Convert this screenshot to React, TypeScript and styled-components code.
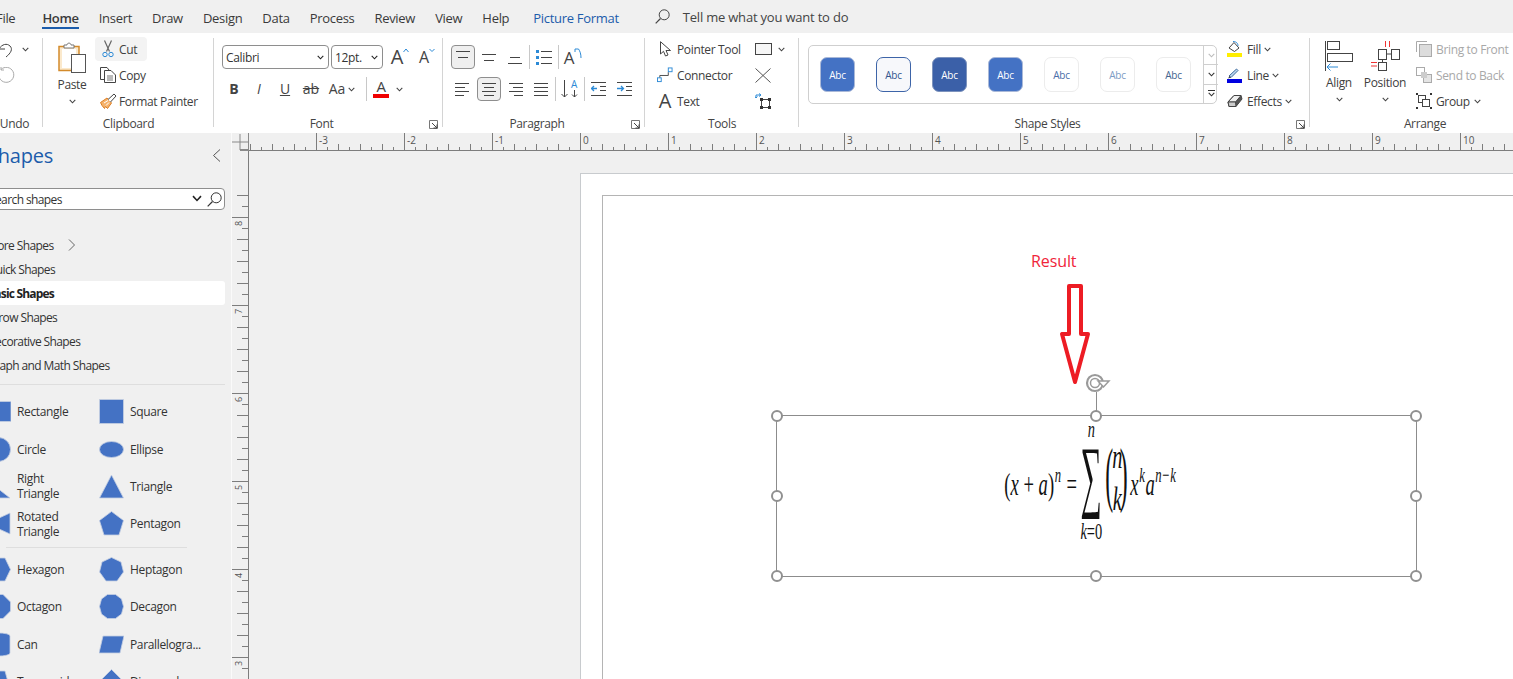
import React from "react";
import styled, { createGlobalStyle } from "styled-components";

const UI = `"Open Sans", "Noto Sans", sans-serif`;

const Global = createGlobalStyle`
  html, body { margin: 0; padding: 0; background: #f0f0f0; overflow: hidden; }
  body { font-family: ${UI}; color: #333; }
`;

const Screen = styled.div`
  width: 1513px;
  height: 679px;
  overflow: hidden;
  background: #f0f0f0;
  display: flex;
  flex-direction: column;
`;

/* tabs */
const TabBar = styled.div`
  height: 33px;
  flex: none;
  display: flex;
  align-items: center;
  gap: 20px;
  margin-left: -4px;
  font-size: 13px;
  letter-spacing: -0.3px;
  white-space: nowrap;
  color: #3a3a3a;
`;
const Tab = styled.div<{ $on?: boolean; $blue?: boolean }>`
  position: relative;
  height: 33px;
  line-height: 36px;
  font-weight: ${(p) => (p.$on ? 600 : 400)};
  color: ${(p) => (p.$blue ? "#1c5cab" : "#3a3a3a")};
  ${(p) => p.$blue && "margin-left: 4px;"}
  ${(p) =>
    p.$on &&
    `margin-left: 7px; &::after { content: ""; position: absolute; left: 0; right: 0; top: 27px; height: 2px; background: #1c5cab; }`}
`;
const TellMe = styled.div`
  display: flex;
  align-items: center;
  gap: 13px;
  margin-left: 16px;
  color: #444;
  letter-spacing: -0.2px;
`;

/* ribbon */
const Ribbon = styled.div`
  height: 100px;
  flex: none;
  background: #fff;
  display: flex;
  padding-top: 3px;
  box-sizing: border-box;
  font-size: 12px;
  letter-spacing: -0.35px;
  white-space: nowrap;
`;
const Group = styled.section<{ $w: number; $ml?: number }>`
  width: ${(p) => p.$w}px;
  margin-left: ${(p) => p.$ml ?? 0}px;
  height: 91px;
  flex: none;
  box-sizing: border-box;
  display: flex;
  flex-direction: column;
  position: relative;
  &::after {
    content: "";
    position: absolute;
    right: 0;
    top: 2px;
    bottom: 0;
    width: 1px;
    background: #d4d4d4;
  }
`;
const GroupBody = styled.div<{ $pad?: number }>`
  height: 78px;
  display: flex;
  padding-left: ${(p) => p.$pad ?? 0}px;
`;
const GroupFoot = styled.div`
  height: 13px;
  line-height: 20px;
  display: flex;
  color: #444;
`;
const GroupName = styled.div`
  flex: 1;
  text-align: center;
`;
const Launcher = styled.div`
  width: 14px;
  padding-top: 6px;
  flex: none;
  line-height: 0;
`;
const Col = styled.div<{ $w?: number; $ml?: number }>`
  display: flex;
  flex-direction: column;
  ${(p) => p.$w && `width: ${p.$w}px; flex: none;`}
  ${(p) => p.$ml && `margin-left: ${p.$ml}px;`}
`;
const ToolRow = styled.div<{ $dim?: boolean; $hover?: boolean; $gap?: number }>`
  height: 26px;
  display: flex;
  align-items: center;
  gap: ${(p) => p.$gap ?? 5}px;
  color: ${(p) => (p.$dim ? "#a8a8a8" : "#404040")};
  ${(p) =>
    p.$hover &&
    `height: 24px; margin: 1px 0 1px -5px; width: 52px; box-sizing: border-box; background: #f3f3f3; border-radius: 4px; padding-left: 7px;`}
`;
const IconSlot = styled.span<{ $w: number }>`
  width: ${(p) => p.$w}px;
  flex: none;
  display: flex;
  justify-content: center;
  align-items: center;
`;
const BigButton = styled.div<{ $w: number; $top: number }>`
  width: ${(p) => p.$w}px;
  flex: none;
  display: flex;
  flex-direction: column;
  align-items: center;
  padding-top: ${(p) => p.$top}px;
  color: #404040;
`;
const BigLabel = styled.div`
  line-height: 16px;
  margin: 4px 0 6px;
`;
const Chev = styled.svg<{ $ml?: number }>`
  flex: none;
  display: block;
  margin-left: ${(p) => p.$ml ?? 0}px;
`;
const Chevron = ({ c = "#444", ml = 0, w = 7 }: { c?: string; ml?: number; w?: number }) => (
  <Chev $ml={ml} width={w} height={(w * 5) / 7} viewBox="0 0 7 5">
    <path d="M.7 .8 3.5 3.8 6.3 .8" fill="none" stroke={c} strokeWidth="1.1" />
  </Chev>
);
const SelectBox = styled.div<{ $w: number }>`
  width: ${(p) => p.$w}px;
  height: 24px;
  flex: none;
  box-sizing: border-box;
  border: 1px solid #8e8e8e;
  border-radius: 4px;
  display: flex;
  align-items: center;
  justify-content: space-between;
  padding: 0 4px 0 3px;
  color: #333;
`;
const FlatRow = styled.div<{ $gap: number; $top: number }>`
  display: flex;
  align-items: center;
  height: 24px;
  gap: ${(p) => p.$gap}px;
  margin-top: ${(p) => p.$top}px;
`;
const Btn = styled.div<{ $w?: number; $on?: boolean; $ml?: number }>`
  width: ${(p) => p.$w ?? 24}px;
  height: 24px;
  flex: none;
  box-sizing: border-box;
  display: flex;
  align-items: center;
  justify-content: center;
  border-radius: 4px;
  color: #444;
  ${(p) => p.$ml && `margin-left: ${p.$ml}px;`}
  ${(p) => p.$on && "background: #efefef; border: 1px solid #8e8e8e;"}
`;
const VRule = styled.div<{ $mx?: number }>`
  width: 1px;
  height: 24px;
  flex: none;
  background: #c8c8c8;
  margin: 0 ${(p) => p.$mx ?? 0}px;
`;
const Glyph = styled.span<{ $size: number; $weight?: number; $italic?: boolean }>`
  font-size: ${(p) => p.$size}px;
  font-weight: ${(p) => p.$weight ?? 400};
  font-style: ${(p) => (p.$italic ? "italic" : "normal")};
  line-height: 1;
  letter-spacing: 0;
  color: #444;
`;
const Strike = styled(Glyph)`
  text-decoration: line-through;
`;
const Under = styled(Glyph)`
  text-decoration: underline;
`;
const FontColor = styled.div`
  width: 16px;
  flex: none;
  display: flex;
  flex-direction: column;
  align-items: center;
  font-size: 15px;
  line-height: 15px;
  margin-top: -1px;
  color: #444;
`;
const ColorBar = styled.div`
  width: 16px;
  height: 4px;
  background: #f00000;
`;

/* gallery */
const Gallery = styled.div`
  width: 409px;
  height: 59px;
  margin-top: 9px;
  flex: none;
  box-sizing: border-box;
  border: 1px solid #cfcfcf;
  border-radius: 5px;
  display: flex;
  align-items: center;
  padding-left: 11px;
  gap: 21px;
`;
const StyleChip = styled.div<{ $bg: string; $fg: string; $bd: string }>`
  width: 35px;
  height: 35px;
  flex: none;
  box-sizing: border-box;
  border-radius: 7px;
  background: ${(p) => p.$bg};
  color: ${(p) => p.$fg};
  border: 1px solid ${(p) => p.$bd};
  font-size: 10px;
  letter-spacing: -0.2px;
  display: flex;
  align-items: center;
  justify-content: center;
`;
const Scroller = styled.div`
  width: 14px;
  height: 57px;
  margin-left: -9px;
  flex: none;
  display: flex;
  flex-direction: column;
  border-left: 1px solid #cfcfcf;
`;
const ScrollCell = styled.div`
  flex: 1;
  display: flex;
  flex-direction: column;
  gap: 1px;
  align-items: center;
  justify-content: center;
  & + & { border-top: 1px solid #cfcfcf; }
`;
const ScrollBar = styled.div`
  width: 7px;
  height: 1px;
  background: #333;
`;

/* lower part */
const Main = styled.div`
  flex: 1;
  display: flex;
  min-height: 0;
`;
const Sidebar = styled.aside`
  width: 232px;
  flex: none;
  box-sizing: border-box;
  border-right: 1px solid #fafafa;
  overflow: hidden;
  font-size: 12px;
  letter-spacing: -0.35px;
`;
const SideInner = styled.div`
  width: 238px;
  margin-left: -13px;
`;
const SideHead = styled.div`
  margin-top: 8px;
  height: 28px;
  display: flex;
  align-items: center;
  justify-content: space-between;
  padding-right: 4px;
  font-size: 20px;
  letter-spacing: -0.2px;
  color: #1c5cab;
`;
const SearchBox = styled.div`
  margin-top: 19px;
  height: 22px;
  box-sizing: border-box;
  background: #fff;
  border: 1px solid #8e8e8e;
  border-radius: 4px;
  display: flex;
  align-items: center;
  gap: 5px;
  padding: 0 2px 0 1px;
  letter-spacing: -0.6px;
  color: #333;
`;
const SearchText = styled.div`
  flex: 1;
`;
const NavList = styled.div`
  margin-top: 23px;
  display: flex;
  flex-direction: column;
  letter-spacing: -0.6px;
`;
const NavItem = styled.div<{ $on?: boolean }>`
  height: 24px;
  display: flex;
  align-items: center;
  gap: 14px;
  color: #333;
  border-radius: 3px;
  ${(p) => p.$on && "background: #fff; font-weight: 700; color: #222; letter-spacing: -0.8px;"}
`;
const SideRule = styled.div<{ $l?: number; $w?: number; $t: number; $b: number }>`
  height: 1px;
  background: #dedede;
  margin: ${(p) => p.$t}px 0 ${(p) => p.$b}px ${(p) => p.$l ?? 0}px;
  ${(p) => p.$w && `width: ${p.$w}px;`}
`;
const ShapeGrid = styled.div`
  display: grid;
  grid-template-columns: 113px 113px;
  grid-auto-rows: 37.4px;
  margin-left: -1px;
`;
const ShapeItem = styled.div`
  display: flex;
  align-items: center;
  gap: 6px;
  line-height: 15px;
  color: #333;
`;
const ShapeName = styled.div`
  white-space: pre-line;
`;

const Workspace = styled.div`
  flex: 1;
  display: flex;
  flex-direction: column;
  min-width: 0;
`;
const RulerRow = styled.div`
  height: 18px;
  flex: none;
  display: flex;
`;
const RulerSvg = styled.svg`
  display: block;
  flex: none;
`;
const CanvasRow = styled.div`
  flex: 1;
  display: flex;
  min-height: 0;
`;
const Canvas = styled.div`
  flex: 1;
  padding: 22px 0 0 331px;
  overflow: hidden;
`;
const Page = styled.div`
  width: 1000px;
  height: 700px;
  box-sizing: border-box;
  background: #fff;
  border: 1px solid #c8cbce;
  padding: 21px;
`;
const Sheet = styled.div`
  height: 100%;
  box-sizing: border-box;
  border: 1px solid #b4b4b4;
  position: relative;
`;
const ResultLabel = styled.div`
  position: absolute;
  left: 428px;
  top: 53px;
  font-size: 16px;
  line-height: 24px;
  letter-spacing: -0.1px;
  color: #f0243a;
`;
const FreeSvg = styled.svg<{ $x: number; $y: number }>`
  position: absolute;
  left: ${(p) => p.$x}px;
  top: ${(p) => p.$y}px;
`;
const Selection = styled.div`
  position: absolute;
  left: 173px;
  top: 219px;
  width: 641px;
  height: 162px;
  box-sizing: border-box;
  border: 1px solid #8c8c8c;
  display: flex;
  justify-content: center;
  align-items: flex-start;
  padding: 9px 12px 0 0;
`;
const Handle = styled.div<{ $x: string; $y: string }>`
  position: absolute;
  left: ${(p) => p.$x};
  top: ${(p) => p.$y};
  width: 12px;
  height: 12px;
  box-sizing: border-box;
  margin: -6.5px 0 0 -6.5px;
  border: 2px solid #909090;
  border-radius: 50%;
  background: #fff;
`;
const Formula = styled.div`
  height: 116px;
  display: flex;
  align-items: center;
  flex: none;
  font-family: "Liberation Serif", serif;
  font-style: italic;
  font-size: 31px;
  color: #111;
  white-space: nowrap;
  transform: scaleX(0.6);
`;
const MathRun = styled.div<{ $ml?: number }>`
  margin-left: ${(p) => p.$ml ?? 0}px;
  padding-top: 4px;
`;
const Upright = styled.span`
  font-style: normal;
`;
const Sup = styled.span`
  font-size: 0.68em;
  vertical-align: 0.6em;
  line-height: 0;
  padding: 0 1px;
`;
const SumCol = styled.div`
  width: 36px;
  display: flex;
  flex-direction: column;
  align-items: center;
  margin-left: 6px;
`;
const Limit = styled.div<{ $h: number; $top?: number }>`
  font-size: 24px;
  line-height: ${(p) => p.$h}px;
  height: ${(p) => p.$h}px;
  margin-top: ${(p) => p.$top ?? 0}px;
`;
const Sigma = styled.div`
  font-style: normal;
  font-size: 80px;
  line-height: 76px;
  height: 76px;
  margin-top: 4px;
  transform: scaleX(0.62);
`;
const Binom = styled.div`
  display: flex;
  align-items: center;
  margin-left: 2px;
  padding-bottom: 18px;
`;
const BigParen = styled.div`
  font-style: normal;
  font-size: 72px;
  line-height: 72px;
  font-weight: 400;
  transform: scaleX(0.55);
  width: 14px;
  text-align: center;
`;
const BinomCol = styled.div`
  display: flex;
  flex-direction: column;
  align-items: center;
  font-size: 34px;
  line-height: 42px;
  margin: 8px -8px 0 1px;
`;

/* rulers */
const HRuler = () => {
  const ticks = [];
  const labels = [];
  for (let i = -30; i < 96; i++) {
    const x = 580 - 232 + i * 11;
    const major = i % 8 === 0;
    const h = major ? 17 : i % 2 === 0 ? 6 : 3;
    ticks.push(<line key={i} x1={x + 0.5} x2={x + 0.5} y1={17 - h} y2={17} stroke="#7d7d7d" />);
    if (major && x > 30) {
      labels.push(
        <text key={i} x={x + 3} y={11} fontSize="10" fill="#555" fontFamily="Open Sans, sans-serif">
          {i / 8}
        </text>
      );
    }
  }
  return (
    <RulerSvg width="1281" height="18" viewBox="0 0 1281 18">
      <path d="M0 9H16M8 1V17M16.500 0V18" stroke="#8a8a8a" fill="none" />
      <path d="M8 17H17" stroke="#8a8a8a" strokeWidth="2" />
      <path d="M17 17.500H1281" stroke="#7d7d7d" fill="none" />
      {ticks}
      {labels}
    </RulerSvg>
  );
};

const VRuler = () => {
  const ticks = [];
  const labels = [];
  // 8 inch mark sits at y=217 on screen, the svg starts at y=151
  for (let i = -2; i < 48; i++) {
    const y = 66 + i * 11;
    const major = i % 8 === 0;
    const w = major ? 16 : i % 2 === 0 ? 11 : 6;
    ticks.push(<line key={i} y1={y + 0.5} y2={y + 0.5} x1={16 - w} x2={16} stroke="#7d7d7d" />);
    if (major) {
      const n = 8 - i / 8;
      labels.push(
        <text
          key={i}
          x={0}
          y={0}
          transform={`translate(9.500 ${y + 9}) rotate(-90)`}
          fontSize="9"
          fill="#555"
          fontFamily="Open Sans, sans-serif"
        >
          {n}
        </text>
      );
    }
  }
  return (
    <RulerSvg width="17" height="528" viewBox="0 0 17 528">
      <path d="M16.500 0V528" stroke="#7d7d7d" />
      {ticks}
      {labels}
    </RulerSvg>
  );
};

/* ribbon icons */
const S = { fill: "none", stroke: "#444" };
const UndoIcon = () => (
  <svg width="16" height="17" viewBox="0 0 16 17">
    <path d="M1 2V8H7M1 8C4 3 9 2 12 5 15 8 13 12 8 16" {...S} />
  </svg>
);
const RedoIcon = () => (
  <svg width="17" height="17" viewBox="0 0 17 17">
    <path d="M3 2.500A7.500 7.500 0 1 1 1 6" fill="none" stroke="#aaa" />
    <path d="M3 0V3H6" fill="none" stroke="#aaa" />
  </svg>
);
const PasteIcon = () => (
  <svg width="28" height="31" viewBox="0 0 28 31">
    <rect x="1" y="4.500" width="20" height="24" fill="#fbe9cc" stroke="#d38a2b" strokeWidth="1.500" />
    <path d="M6 6V3H9C9 .5 13 .5 13 3H16V6Z" fill="#fff" stroke="#777" />
    <rect x="4" y="7" width="14" height="19" fill="#fff" />
    <rect x="13.500" y="12.500" width="14" height="18" fill="#fff" stroke="#555" />
  </svg>
);
const ScissorsIcon = () => (
  <svg width="12" height="18" viewBox="0 0 12 18">
    <path d="M2.500 .5 7.500 11.500M9.500 .5 4.500 11.500" fill="none" stroke="#666" strokeWidth="1.200" />
    <circle cx="3" cy="14.500" r="2.200" fill="none" stroke="#2c8ad6" />
    <circle cx="9" cy="14.500" r="2.200" fill="none" stroke="#2c8ad6" />
  </svg>
);
const CopyIcon = () => (
  <svg width="16" height="16" viewBox="0 0 16 16">
    <path d="M4 12.500H.5V.5H7L9 3" {...S} />
    <path d="M4.500 3.500H11L15.500 8V15.500H4.500Z" fill="#fff" stroke="#444" />
    <path d="M7 9H13M7 11H13M7 13H13" stroke="#777" />
  </svg>
);
const PainterIcon = () => (
  <svg width="17" height="16" viewBox="0 0 17 16">
    <path d="M.5 9.500 7 5 11.500 10 7.500 15.500 5.500 13.500 4.500 15.500 2 12.500Z" fill="#f5b26b" stroke="#dc7f25" />
    <path d="M4 10 8 7.500M6 12.500 9 9.500" stroke="#fff" />
    <path d="M8 6.500 14 1 16 3 10.500 9" fill="#fff" stroke="#444" />
  </svg>
);
const CaretBox = styled.svg`
  align-self: flex-start;
  margin-top: 3px;
  flex: none;
`;
const Caret = ({ down }: { down?: boolean }) => (
  <CaretBox width="6" height="5" viewBox="0 0 6 5">
    <path d={down ? "M.5 1 3 3.500 5.500 1" : "M.5 4 3 1 5.500 4"} fill="none" stroke="#2c8ad6" />
  </CaretBox>
);
const Launch = () => (
  <svg width="9" height="9" viewBox="0 0 9 9">
    <path d="M.5 8.500V.5H8.500V8.500Z" fill="none" stroke="#777" />
    <path d="M3 3 8 8M8 4.500V8H4.500" fill="none" stroke="#444" />
  </svg>
);
type Ln = [number, number, number];
const Lines = ({ rows }: { rows: Ln[] }) => (
  <svg width="18" height="18" viewBox="0 0 18 18">
    {rows.map(([a, b, y]) => (
      <line key={y} x1={a} x2={b} y1={y + 0.5} y2={y + 0.5} stroke="#444" />
    ))}
  </svg>
);
const BulletsIcon = () => (
  <svg width="17" height="16" viewBox="0 0 17 16">
    <path d="M0 1H3V4H0ZM0 7H3V10H0ZM0 13H3V16H0Z" fill="#2c8ad6" />
    <path d="M5 2.500H16M5 8.500H16M5 14.500H16" stroke="#444" />
  </svg>
);
const RotateIcon = () => (
  <CaretBox width="8" height="11" viewBox="0 0 8 11">
    <path d="M1 1H4.500C6 3 7 6 7 10M1 1 1 4" fill="none" stroke="#2c8ad6" />
  </CaretBox>
);
const SortIcon = () => (
  <svg width="18" height="20" viewBox="0 0 18 20">
    <path d="M3.500 1V18M.5 15 3.500 18 6.500 15M13.500 11V18M11 15.500 13.500 18 16 15.500" fill="none" stroke="#444" />
    <text x="10" y="9" fontSize="10" fill="#2c8ad6" fontFamily="Open Sans, sans-serif">A</text>
  </svg>
);
const IndentIcon = ({ flip }: { flip?: boolean }) => (
  <svg width="16" height="14" viewBox="0 0 16 14">
    <path d="M0 .5H15M9 4.500H15M9 8.500H15M0 13.500H15" stroke="#444" />
    <path d={flip ? "M0 6.500H6M4 4 6.500 6.500 4 9" : "M6 6.500H.5M3 4 .5 6.500 3 9"} fill="none" stroke="#2c8ad6" strokeWidth="1.300" />
  </svg>
);
const PointerIcon = () => (
  <svg width="13" height="16" viewBox="0 0 13 16">
    <path d="M1.500 .7V13L4.500 10.300 6.500 15 9 14 7 9.500H11.500Z" fill="#fff" stroke="#444" />
  </svg>
);
const ConnectorIcon = () => (
  <svg width="17" height="16" viewBox="0 0 17 16">
    <path d="M3 11V8.500H12V5" fill="none" stroke="#444" />
    <rect x=".5" y="11" width="4" height="4" fill="#fff" stroke="#2c8ad6" />
    <rect x="12" y=".5" width="4" height="4" fill="#fff" stroke="#2c8ad6" />
  </svg>
);
const RectIcon = () => (
  <svg width="17" height="12" viewBox="0 0 17 12">
    <rect x=".5" y=".5" width="16" height="11" fill="#f6f6f6" stroke="#444" />
  </svg>
);
const CrossIcon = () => (
  <svg width="16" height="15" viewBox="0 0 16 15">
    <path d="M.5 .5 15.500 14.500M15.500 .5 .5 14.500" stroke="#555" fill="none" />
  </svg>
);
const TransformIcon = () => (
  <svg width="17" height="17" viewBox="0 0 17 17">
    <rect x="6.500" y="6.500" width="8" height="8" fill="none" stroke="#444" />
    <path d="M5 5H8V8H5ZM13 5H16V8H13ZM5 13H8V16H5ZM13 13H16V16H13Z" fill="#333" />
    <path d="M1 5V2H6M4 .5 6 2 4 3.500M.0 3.500 1 5 2.500 3.500" fill="none" stroke="#2c8ad6" />
  </svg>
);
const FillIcon = () => (
  <svg width="16" height="16" viewBox="0 0 16 16">
    <path d="M2 7 7 1.500 12 7 7.500 10.500Z" fill="#fff" stroke="#444" />
    <path d="M6 .5C10 .5 11 3 11 5" fill="none" stroke="#2c8ad6" />
    <rect x="0" y="12" width="15" height="4" fill="#ffee00" />
  </svg>
);
const LineIcon = () => (
  <svg width="16" height="16" viewBox="0 0 16 16">
    <path d="M2 9 9.500 2 11 3.500 4 10.500Z" fill="#bcd6ee" stroke="#3d6a9c" />
    <path d="M1 11.500 2.500 9 4 10.500Z" fill="#444" />
    <rect x="0" y="12" width="15" height="4" fill="#0000e0" />
  </svg>
);
const EffectsIcon = () => (
  <svg width="16" height="14" viewBox="0 0 16 14">
    <path d="M1 8 7 1.500H14L15 5 9 12.500H2Z" fill="#555" stroke="#444" />
    <path d="M1 8H8.500L14 1.500H7Z" fill="#eee" stroke="#444" />
    <path d="M1 8 2 12.500H9L8.500 8Z" fill="#ccc" stroke="#444" />
  </svg>
);
const AlignIcon = () => (
  <svg width="29" height="30" viewBox="0 0 29 30">
    <path d="M.5 0V30" stroke="#444" />
    <rect x="2.500" y=".5" width="12" height="8" fill="#fff" stroke="#444" />
    <rect x="2.500" y="12.500" width="25" height="8" fill="#fff" stroke="#444" />
    <path d="M13 26H2M5.500 22.500 2 26 5.500 29.500" fill="none" stroke="#2c8ad6" />
  </svg>
);
const PositionIcon = () => (
  <svg width="29" height="30" viewBox="0 0 29 30">
    <path d="M14.500 0V6M18.500 0V6M0 21.500H6M0 25H6" stroke="#e33" fill="none" />
    <rect x="7.500" y="8.500" width="8" height="10" fill="#fff" stroke="#444" />
    <rect x="20.500" y="8.500" width="8" height="10" fill="#fff" stroke="#444" />
    <rect x="7.500" y="21.500" width="8" height="8" fill="#fff" stroke="#444" />
    <path d="M15.500 13H20.500M11.500 18.500V21.500" stroke="#444" />
  </svg>
);
const BringIcon = ({ back }: { back?: boolean }) =>
  back ? (
    <svg width="16" height="16" viewBox="0 0 16 16">
      <rect x=".5" y=".5" width="8" height="8" fill="#fff" stroke="#aaa" />
      <rect x="7.500" y="7.500" width="8" height="8" fill="#e4e4e4" stroke="#aaa" />
      <rect x="5" y="5" width="6" height="6" fill="#ccc" />
    </svg>
  ) : (
    <svg width="16" height="16" viewBox="0 0 16 16">
      <path d="M.5 11V.5H11" fill="none" stroke="#aaa" />
      <rect x="3.500" y="3.500" width="12" height="12" fill="#dcdcdc" stroke="#aaa" />
    </svg>
  );
const GroupIcon = () => (
  <svg width="16" height="16" viewBox="0 0 16 16">
    <rect x="2.500" y="2.500" width="7" height="7" fill="none" stroke="#444" />
    <rect x="6.500" y="6.500" width="7" height="7" fill="#fff" stroke="#444" />
    <path d="M0 0H2V2H0ZM14 0H16V2H14ZM0 14H2V16H0ZM14 14H16V16H14Z" fill="#333" />
  </svg>
);
const Magnifier = ({ c = "#444" }: { c?: string }) => (
  <svg width="15" height="15" viewBox="0 0 15 15">
    <circle cx="9.200" cy="5.800" r="5" fill="none" stroke={c} />
    <path d="M5.500 9.500.7 14.300" stroke={c} strokeWidth="1.200" />
  </svg>
);

/* sidebar shapes */
const B = "#4472c4";
const shapeDraw: Record<string, React.ReactNode> = {
  rect: <rect x="5" y="2.500" width="20" height="20" />,
  square: <rect x="0.5" y="0.5" width="24" height="24" />,
  circle: <circle cx="12.500" cy="12.500" r="12" />,
  ellipse: <ellipse cx="12.500" cy="12.500" rx="12" ry="8" />,
  rtri: <polygon points="1,6 24,24 1,24" />,
  tri: <polygon points="12.500,1 24.500,24 .5,24" />,
  rotri: <polygon points="24,2 24,23 1,12.500" />,
  pent: <polygon points="12.500,0.500 24.500,9.500 20,24 5,24 0.500,9.500" />,
  hex: <polygon points="6,1 19,1 24.500,12.500 19,24 6,24 .5,12.500" />,
  hept: <polygon points="12.500,.5 22,5 24.500,15 18,24 7,24 .5,15 3,5" />,
  oct: <polygon points="8,.5 17,.5 24.500,8 24.500,17 17,24.500 8,24.500 .5,17 .5,8" />,
  dec: <polygon points="8.500,.5 16.500,.5 22.500,5 24.500,12.500 22.500,20 16.500,24.500 8.500,24.500 2.500,20 .5,12.500 2.500,5" />,
  can: <path d="M1 4C1 0 24 0 24 4V21C24 25 1 25 1 21Z" />,
  para: <polygon points="4,4 25,4 21,21 0,21" />,
  trap: <polygon points="6,2 19,2 25,24 0,24" />,
  diamond: <polygon points="12.500,.5 24.500,12.500 12.500,24.500 .5,12.500" />,
};
const shapesA: [string, string][] = [
  ["rect", "Rectangle"],
  ["square", "Square"],
  ["circle", "Circle"],
  ["ellipse", "Ellipse"],
  ["rtri", "Right\nTriangle"],
  ["tri", "Triangle"],
  ["rotri", "Rotated\nTriangle"],
  ["pent", "Pentagon"],
];
const shapesB: [string, string][] = [
  ["hex", "Hexagon"],
  ["hept", "Heptagon"],
  ["oct", "Octagon"],
  ["dec", "Decagon"],
  ["can", "Can"],
  ["para", "Parallelogra..."],
  ["trap", "Trapezoid"],
  ["diamond", "Diamond"],
];
const ShapeIcon = styled.svg`
  flex: none;
  fill: ${B};
  stroke: #c5cfe2;
  stroke-width: 0.8;
`;
const ShapeList = ({ items }: { items: [string, string][] }) => (
  <ShapeGrid>
    {items.map(([k, name]) => (
      <ShapeItem key={k}>
        <ShapeIcon width="25" height="25" viewBox="0 0 25 25">
          {shapeDraw[k]}
        </ShapeIcon>
        <ShapeName>{name}</ShapeName>
      </ShapeItem>
    ))}
  </ShapeGrid>
);

const chips = [
  { bg: "#4472c4", fg: "#fff", bd: "#aab9d8" },
  { bg: "#f7f8fb", fg: "#33568f", bd: "#3d64a8" },
  { bg: "#3b60a8", fg: "#fff", bd: "#7d93bd" },
  { bg: "#4472c4", fg: "#fff", bd: "#aab9d8" },
  { bg: "#fff", fg: "#4a6da8", bd: "#ececec" },
  { bg: "#fff", fg: "#7c9bc4", bd: "#ececec" },
  { bg: "#fff", fg: "#44648f", bd: "#ececec" },
];
const handles: [string, string][] = [
  ["0", "0"],
  ["50%", "0"],
  ["100%", "0"],
  ["0", "50%"],
  ["100%", "50%"],
  ["0", "100%"],
  ["50%", "100%"],
  ["100%", "100%"],
];

export default function App() {
  return (
    <Screen>
      <Global />
      <TabBar>
        <Tab>File</Tab>
        <Tab $on>Home</Tab>
        <Tab>Insert</Tab>
        <Tab>Draw</Tab>
        <Tab>Design</Tab>
        <Tab>Data</Tab>
        <Tab>Process</Tab>
        <Tab>Review</Tab>
        <Tab>View</Tab>
        <Tab>Help</Tab>
        <Tab $blue>Picture Format</Tab>
        <TellMe>
          <Magnifier />
          Tell me what you want to do
        </TellMe>
      </TabBar>

      <Ribbon>
        <Group $w={57} $ml={-14}>
          <GroupBody $pad={12}>
            <Col>
              <ToolRow $gap={8}>
                <UndoIcon />
                <Chevron />
              </ToolRow>
              <ToolRow>
                <RedoIcon />
              </ToolRow>
            </Col>
          </GroupBody>
          <GroupFoot>
            <GroupName>Undo</GroupName>
          </GroupFoot>
        </Group>

        <Group $w={171}>
          <GroupBody $pad={9}>
            <BigButton $w={40} $top={6}>
              <PasteIcon />
              <BigLabel>Paste</BigLabel>
              <Chevron />
            </BigButton>
            <Col $ml={8}>
              <ToolRow $hover $gap={5}>
                <ScissorsIcon />
                Cut
              </ToolRow>
              <ToolRow $gap={3}>
                <CopyIcon />
                Copy
              </ToolRow>
              <ToolRow $gap={2}>
                <PainterIcon />
                Format Painter
              </ToolRow>
            </Col>
          </GroupBody>
          <GroupFoot>
            <GroupName>Clipboard</GroupName>
          </GroupFoot>
        </Group>

        <Group $w={229}>
          <GroupBody $pad={8}>
            <Col>
              <FlatRow $gap={2} $top={9}>
                <SelectBox $w={107}>
                  Calibri
                  <Chevron c="#222" />
                </SelectBox>
                <SelectBox $w={52}>
                  12pt.
                  <Chevron c="#222" />
                </SelectBox>
                <Btn $w={20} $ml={5}>
                  <Glyph $size={20}>A</Glyph>
                  <Caret />
                </Btn>
                <Btn $w={20} $ml={5}>
                  <Glyph $size={16}>A</Glyph>
                  <Caret down />
                </Btn>
              </FlatRow>
              <FlatRow $gap={0} $top={8}>
                <Btn>
                  <Glyph $size={14} $weight={700}>B</Glyph>
                </Btn>
                <Btn $w={26}>
                  <Glyph $size={14} $italic>I</Glyph>
                </Btn>
                <Btn $w={26}>
                  <Under $size={14}>U</Under>
                </Btn>
                <Btn $w={26}>
                  <Strike $size={14}>ab</Strike>
                </Btn>
                <Btn $w={36}>
                  <Glyph $size={14}>Aa</Glyph>
                  <Chevron ml={3} />
                </Btn>
                <VRule $mx={6} />
                <FontColor>
                  A
                  <ColorBar />
                </FontColor>
                <Chevron ml={7} />
              </FlatRow>
            </Col>
          </GroupBody>
          <GroupFoot>
            <GroupName>Font</GroupName>
            <Launcher>
              <Launch />
            </Launcher>
          </GroupFoot>
        </Group>

        <Group $w={202}>
          <GroupBody $pad={8}>
            <Col>
              <FlatRow $gap={2} $top={9}>
                <Btn $on>
                  <Lines rows={[[2, 16, 3], [4, 14, 9]]} />
                </Btn>
                <Btn>
                  <Lines rows={[[2, 16, 6], [4, 14, 12]]} />
                </Btn>
                <Btn>
                  <Lines rows={[[4, 14, 9], [2, 16, 15]]} />
                </Btn>
                <VRule />
                <Btn>
                  <BulletsIcon />
                </Btn>
                <VRule />
                <Btn>
                  <Glyph $size={17}>A</Glyph>
                  <RotateIcon />
                </Btn>
              </FlatRow>
              <FlatRow $gap={2} $top={8}>
                <Btn>
                  <Lines rows={[[1, 15, 3], [1, 11, 7], [1, 15, 11], [1, 10, 15]]} />
                </Btn>
                <Btn $on>
                  <Lines rows={[[2, 16, 3], [4, 14, 7], [2, 16, 11], [4, 14, 15]]} />
                </Btn>
                <Btn>
                  <Lines rows={[[3, 17, 3], [7, 17, 7], [3, 17, 11], [8, 17, 15]]} />
                </Btn>
                <Btn>
                  <Lines rows={[[2, 16, 3], [2, 16, 7], [2, 16, 11], [2, 16, 15]]} />
                </Btn>
                <VRule />
                <Btn>
                  <SortIcon />
                </Btn>
                <VRule />
                <Btn>
                  <IndentIcon />
                </Btn>
                <Btn>
                  <IndentIcon flip />
                </Btn>
              </FlatRow>
            </Col>
          </GroupBody>
          <GroupFoot>
            <GroupName>Paragraph</GroupName>
            <Launcher>
              <Launch />
            </Launcher>
          </GroupFoot>
        </Group>

        <Group $w={154}>
          <GroupBody $pad={12}>
            <Col $w={98}>
              <ToolRow $gap={4}>
                <IconSlot $w={16}>
                  <PointerIcon />
                </IconSlot>
                Pointer Tool
              </ToolRow>
              <ToolRow $gap={4}>
                <IconSlot $w={16}>
                  <ConnectorIcon />
                </IconSlot>
                Connector
              </ToolRow>
              <ToolRow $gap={4}>
                <IconSlot $w={16}>
                  <Glyph $size={20}>A</Glyph>
                </IconSlot>
                Text
              </ToolRow>
            </Col>
            <Col>
              <ToolRow $gap={6}>
                <RectIcon />
                <Chevron />
              </ToolRow>
              <ToolRow>
                <CrossIcon />
              </ToolRow>
              <ToolRow>
                <TransformIcon />
              </ToolRow>
            </Col>
          </GroupBody>
          <GroupFoot>
            <GroupName>Tools</GroupName>
          </GroupFoot>
        </Group>

        <Group $w={511}>
          <GroupBody $pad={9}>
            <Gallery>
              {chips.map((c, i) => (
                <StyleChip key={i} $bg={c.bg} $fg={c.fg} $bd={c.bd}>
                  Abc
                </StyleChip>
              ))}
              <Scroller>
                <ScrollCell>
                  <Chevron c="#bbb" />
                </ScrollCell>
                <ScrollCell>
                  <Chevron c="#333" />
                </ScrollCell>
                <ScrollCell>
                  <ScrollBar />
                  <Chevron c="#333" />
                </ScrollCell>
              </Scroller>
            </Gallery>
            <Col $ml={10}>
              <ToolRow $gap={4}>
                <FillIcon />
                Fill
                <Chevron ml={-1} />
              </ToolRow>
              <ToolRow $gap={4}>
                <LineIcon />
                Line
                <Chevron ml={-1} />
              </ToolRow>
              <ToolRow $gap={4}>
                <EffectsIcon />
                Effects
                <Chevron ml={-1} />
              </ToolRow>
            </Col>
          </GroupBody>
          <GroupFoot>
            <GroupName>Shape Styles</GroupName>
            <Launcher>
              <Launch />
            </Launcher>
          </GroupFoot>
        </Group>

        <Group $w={230}>
          <GroupBody $pad={6}>
            <BigButton $w={46} $top={5}>
              <AlignIcon />
              <BigLabel>Align</BigLabel>
              <Chevron />
            </BigButton>
            <BigButton $w={46} $top={5}>
              <PositionIcon />
              <BigLabel>Position</BigLabel>
              <Chevron />
            </BigButton>
            <Col $ml={8}>
              <ToolRow $dim $gap={4}>
                <BringIcon />
                Bring to Front
              </ToolRow>
              <ToolRow $dim $gap={4}>
                <BringIcon back />
                Send to Back
              </ToolRow>
              <ToolRow $gap={4}>
                <GroupIcon />
                Group
                <Chevron />
              </ToolRow>
            </Col>
          </GroupBody>
          <GroupFoot>
            <GroupName>Arrange</GroupName>
          </GroupFoot>
        </Group>
      </Ribbon>

      <Main>
        <Sidebar>
          <SideInner>
            <SideHead>
              Shapes
              <svg width="9" height="13" viewBox="0 0 9 13">
                <path d="M8 .5 1.500 6.500 8 12.500" fill="none" stroke="#555" />
              </svg>
            </SideHead>
            <SearchBox>
              <SearchText>Search shapes</SearchText>
              <Chevron c="#222" w={10} />
              <Magnifier c="#333" />
            </SearchBox>
            <NavList>
              <NavItem>
                More Shapes
                <svg width="7" height="12" viewBox="0 0 7 12">
                  <path d="M1 .5 6.500 6 1 11.500" fill="none" stroke="#666" />
                </svg>
              </NavItem>
              <NavItem>Quick Shapes</NavItem>
              <NavItem $on>Basic Shapes</NavItem>
              <NavItem>Arrow Shapes</NavItem>
              <NavItem>Decorative Shapes</NavItem>
              <NavItem>Graph and Math Shapes</NavItem>
            </NavList>
            <SideRule $t={7} $b={8} />
            <ShapeList items={shapesA} />
            <SideRule $t={4} $b={3} $l={19} $w={181} />
            <ShapeList items={shapesB} />
          </SideInner>
        </Sidebar>

        <Workspace>
          <RulerRow>
            <HRuler />
          </RulerRow>
          <CanvasRow>
            <VRuler />
            <Canvas>
              <Page>
                <Sheet>
                  <ResultLabel>Result</ResultLabel>
                  <FreeSvg $x={456} $y={86} width="32" height="104" viewBox="0 0 32 104">
                    <path
                      d="M10 4H22V52H29L16 100 3 52H10Z"
                      fill="none"
                      stroke="#ed1c24"
                      strokeWidth="4"
                      strokeLinejoin="round"
                    />
                  </FreeSvg>
                  <FreeSvg $x={480} $y={176} width="28" height="44" viewBox="0 0 28 44">
                    <path d="M13.500 20V40" stroke="#8c8c8c" />
                    <circle cx="12" cy="11" r="8" fill="#fff" stroke="#9a9a9a" strokeWidth="2.200" />
                    <circle cx="12" cy="11" r="4.500" fill="none" stroke="#9a9a9a" strokeWidth="1.500" />
                    <path d="M15 9H26L20.500 15Z" fill="#fff" stroke="#9a9a9a" strokeWidth="1.500" />
                  </FreeSvg>
                  <Selection>
                    {handles.map(([x, y]) => (
                      <Handle key={x + y} $x={x} $y={y} />
                    ))}
                    <Formula>
                      <MathRun>
                        <Upright>(</Upright>x <Upright>+</Upright> a<Upright>)</Upright>
                        <Sup>n</Sup>
                      </MathRun>
                      <MathRun $ml={8}>
                        <Upright>=</Upright>
                      </MathRun>
                      <SumCol>
                        <Limit $h={8}>n</Limit>
                        <Sigma>∑</Sigma>
                        <Limit $h={20} $top={8}>
                          k<Upright>=0</Upright>
                        </Limit>
                      </SumCol>
                      <Binom>
                        <BigParen>(</BigParen>
                        <BinomCol>
                          <div>n</div>
                          <div>k</div>
                        </BinomCol>
                        <BigParen>)</BigParen>
                      </Binom>
                      <MathRun $ml={7}>
                        x<Sup>k</Sup>a<Sup>n−k</Sup>
                      </MathRun>
                    </Formula>
                  </Selection>
                </Sheet>
              </Page>
            </Canvas>
          </CanvasRow>
        </Workspace>
      </Main>
    </Screen>
  );
}
